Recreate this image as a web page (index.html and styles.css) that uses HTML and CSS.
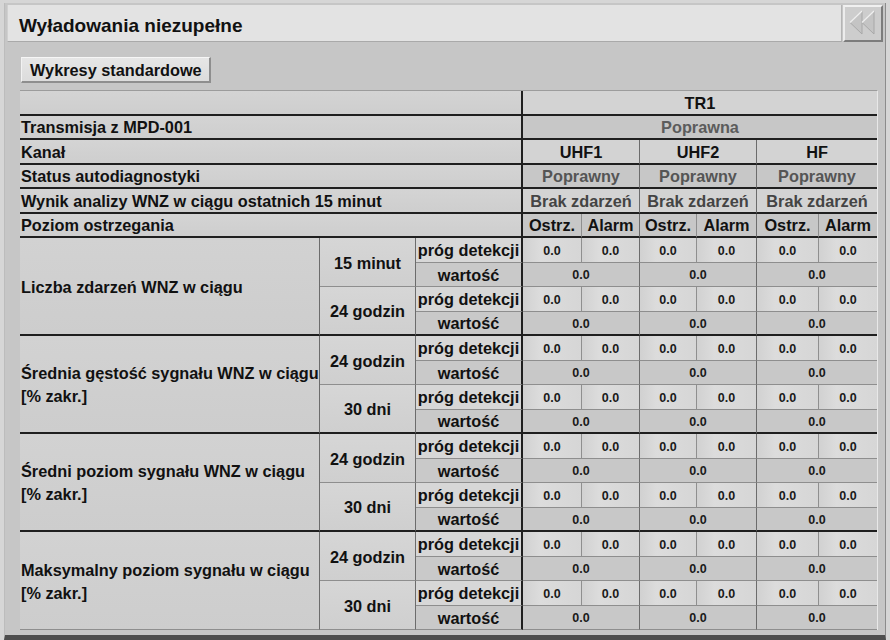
FILE: index.html
```html
<!DOCTYPE html>
<html lang="pl">
<head>
<meta charset="utf-8">
<title>Wyładowania niezupełne</title>
<link rel="stylesheet" href="styles.css">
</head>
<body>
<div class="panel">
  <div class="titlerow">
    <div class="titlebar">Wyładowania niezupełne</div>
    <div class="backbtn">
      <svg width="36" height="33" viewBox="0 0 36 33">
        <polygon points="5,15.5 17,4 17,27" fill="#c4c4c4" stroke="#a8a8a8" stroke-width="1"/>
        <polyline points="17,4 5,15.5" fill="none" stroke="#f0f0f0" stroke-width="1.3"/>
        <polygon points="17,15.5 29,4 29,27" fill="#c4c4c4" stroke="#a8a8a8" stroke-width="1"/>
        <polyline points="29,4 17,15.5" fill="none" stroke="#f0f0f0" stroke-width="1.3"/>
      </svg>
    </div>
  </div>
  <div class="toolbar">
    <div class="stdbtn">Wykresy standardowe</div>
  </div>
  <div class="tbl">
    <!-- header rows -->
    <div class="c l s3 hl bb2 br2"></div>
    <div class="c s6 hr1 bb2">TR1</div>

    <div class="c l s3 hl bb2 br2">Transmisja z MPD-001</div>
    <div class="c s6 hr2 bb2 st1">Poprawna</div>

    <div class="c l s3 hl bb2 br2">Kanał</div>
    <div class="c s2 hr1 bb2 br1">UHF1</div>
    <div class="c s2 hr1 bb2 br1">UHF2</div>
    <div class="c s2 hr1 bb2">HF</div>

    <div class="c l s3 hl bb2 br2">Status autodiagnostyki</div>
    <div class="c s2 hr2 bb2 br1 st2">Poprawny</div>
    <div class="c s2 hr2 bb2 br1 st2">Poprawny</div>
    <div class="c s2 hr2 bb2 st2">Poprawny</div>

    <div class="c l s3 hl bb2 br2">Wynik analizy WNZ w ciągu ostatnich 15 minut</div>
    <div class="c s2 hr1 bb2 br1 st3">Brak zdarzeń</div>
    <div class="c s2 hr1 bb2 br1 st3">Brak zdarzeń</div>
    <div class="c s2 hr1 bb2 st3">Brak zdarzeń</div>

    <div class="c l s3 hl bb2 br2">Poziom ostrzegania</div>
    <div class="c hr2 bb2 brs">Ostrz.</div>
    <div class="c hr2 bb2 br1">Alarm</div>
    <div class="c hr2 bb2 brs">Ostrz.</div>
    <div class="c hr2 bb2 br1">Alarm</div>
    <div class="c hr2 bb2 brs">Ostrz.</div>
    <div class="c hr2 bb2">Alarm</div>

    <!-- group 1 -->
    <div class="c l r4 grp bb2 br1">Liczba zdarzeń WNZ w ciągu</div>
    <div class="c r2 per bb1 br1">15 minut</div>
    <div class="c pl bb1 br2">próg detekcji</div>
    <div class="v vp bb1 brs">0.0</div><div class="v vp bb1 br1">0.0</div>
    <div class="v vp bb1 brs">0.0</div><div class="v vp bb1 br1">0.0</div>
    <div class="v vp bb1 brs">0.0</div><div class="v vp bb1">0.0</div>
    <div class="c wl bb1 br2">wartość</div>
    <div class="v vw s2 bb1 br1">0.0</div><div class="v vw s2 bb1 br1">0.0</div><div class="v vw s2 bb1">0.0</div>

    <div class="c r2 per bb2 br1">24 godzin</div>
    <div class="c pl bb1 br2">próg detekcji</div>
    <div class="v vp bb1 brs">0.0</div><div class="v vp bb1 br1">0.0</div>
    <div class="v vp bb1 brs">0.0</div><div class="v vp bb1 br1">0.0</div>
    <div class="v vp bb1 brs">0.0</div><div class="v vp bb1">0.0</div>
    <div class="c wl bb2 br2">wartość</div>
    <div class="v vw s2 bb2 br1">0.0</div><div class="v vw s2 bb2 br1">0.0</div><div class="v vw s2 bb2">0.0</div>

    <!-- group 2 -->
    <div class="c l r4 grp bb2 br1 two">Średnia gęstość sygnału WNZ w ciągu<br>[% zakr.]</div>
    <div class="c r2 per bb1 br1">24 godzin</div>
    <div class="c pl bb1 br2">próg detekcji</div>
    <div class="v vp bb1 brs">0.0</div><div class="v vp bb1 br1">0.0</div>
    <div class="v vp bb1 brs">0.0</div><div class="v vp bb1 br1">0.0</div>
    <div class="v vp bb1 brs">0.0</div><div class="v vp bb1">0.0</div>
    <div class="c wl bb1 br2">wartość</div>
    <div class="v vw s2 bb1 br1">0.0</div><div class="v vw s2 bb1 br1">0.0</div><div class="v vw s2 bb1">0.0</div>

    <div class="c r2 per bb2 br1">30 dni</div>
    <div class="c pl bb1 br2">próg detekcji</div>
    <div class="v vp bb1 brs">0.0</div><div class="v vp bb1 br1">0.0</div>
    <div class="v vp bb1 brs">0.0</div><div class="v vp bb1 br1">0.0</div>
    <div class="v vp bb1 brs">0.0</div><div class="v vp bb1">0.0</div>
    <div class="c wl bb2 br2">wartość</div>
    <div class="v vw s2 bb2 br1">0.0</div><div class="v vw s2 bb2 br1">0.0</div><div class="v vw s2 bb2">0.0</div>

    <!-- group 3 -->
    <div class="c l r4 grp bb2 br1 two">Średni poziom sygnału WNZ w ciągu<br>[% zakr.]</div>
    <div class="c r2 per bb1 br1">24 godzin</div>
    <div class="c pl bb1 br2">próg detekcji</div>
    <div class="v vp bb1 brs">0.0</div><div class="v vp bb1 br1">0.0</div>
    <div class="v vp bb1 brs">0.0</div><div class="v vp bb1 br1">0.0</div>
    <div class="v vp bb1 brs">0.0</div><div class="v vp bb1">0.0</div>
    <div class="c wl bb1 br2">wartość</div>
    <div class="v vw s2 bb1 br1">0.0</div><div class="v vw s2 bb1 br1">0.0</div><div class="v vw s2 bb1">0.0</div>

    <div class="c r2 per bb2 br1">30 dni</div>
    <div class="c pl bb1 br2">próg detekcji</div>
    <div class="v vp bb1 brs">0.0</div><div class="v vp bb1 br1">0.0</div>
    <div class="v vp bb1 brs">0.0</div><div class="v vp bb1 br1">0.0</div>
    <div class="v vp bb1 brs">0.0</div><div class="v vp bb1">0.0</div>
    <div class="c wl bb2 br2">wartość</div>
    <div class="v vw s2 bb2 br1">0.0</div><div class="v vw s2 bb2 br1">0.0</div><div class="v vw s2 bb2">0.0</div>

    <!-- group 4 -->
    <div class="c l r4 grp bb1 br1 two">Maksymalny poziom sygnału w ciągu<br>[% zakr.]</div>
    <div class="c r2 per bb1 br1">24 godzin</div>
    <div class="c pl bb1 br2">próg detekcji</div>
    <div class="v vp bb1 brs">0.0</div><div class="v vp bb1 br1">0.0</div>
    <div class="v vp bb1 brs">0.0</div><div class="v vp bb1 br1">0.0</div>
    <div class="v vp bb1 brs">0.0</div><div class="v vp bb1">0.0</div>
    <div class="c wl bb1 br2">wartość</div>
    <div class="v vw s2 bb1 br1">0.0</div><div class="v vw s2 bb1 br1">0.0</div><div class="v vw s2 bb1">0.0</div>

    <div class="c r2 per bb1 br1">30 dni</div>
    <div class="c pl bb1 br2">próg detekcji</div>
    <div class="v vp bb1 brs">0.0</div><div class="v vp bb1 br1">0.0</div>
    <div class="v vp bb1 brs">0.0</div><div class="v vp bb1 br1">0.0</div>
    <div class="v vp bb1 brs">0.0</div><div class="v vp bb1">0.0</div>
    <div class="c wl bb1 br2">wartość</div>
    <div class="v vw s2 bb1 br1">0.0</div><div class="v vw s2 bb1 br1">0.0</div><div class="v vw s2 bb1">0.0</div>
  </div>
</div>
</body>
</html>
```
FILE: styles.css
```css
html, body {
  margin: 0;
  padding: 0;
}
body {
  width: 890px;
  height: 640px;
  overflow: hidden;
  background: #d6d6d6;
  font-family: "Liberation Sans", Arial, sans-serif;
  color: #111;
}
.panel {
  box-sizing: border-box;
  margin: 3px 0 0 4px;
  width: 882px;
  height: 637px;
  padding: 2px 2px 0 3px;
  background: #c6c6c6;
  border-left: 1px solid #bcbcbc;
  border-right: 1px solid #8c8c8c;
  border-bottom: 5px solid #4e4e4e;
}
.titlerow {
  display: flex;
  gap: 1px;
  height: 37px;
  margin-left: -1px;
}
.titlebar {
  flex: 1;
  box-sizing: border-box;
  background: #e3e3e3;
  border-bottom: 1px solid #a9a9a9;
  border-right: 1px solid #b4b4b4;
  border-left: 1px solid #d0d0d0;
  font-weight: bold;
  font-size: 19px;
  padding: 6px 0 0 11px;
  display: flex;
  align-items: center;
}
.backbtn {
  width: 40px;
  box-sizing: border-box;
  background: #cdcdcd;
  border-top: 2px solid #f0f0f0;
  border-left: 2px solid #ececec;
  border-bottom: 2px solid #7c7c7c;
  border-right: 2px solid #7c7c7c;
  display: flex;
  align-items: center;
  justify-content: center;
}
.toolbar {
  margin-top: 15px;
  margin-left: 13px;
  height: 26px;
  display: flex;
}
.stdbtn {
  box-sizing: border-box;
  width: 190px;
  height: 26px;
  background: linear-gradient(#e6e6e6, #dcdcdc);
  border-top: 1px solid #f6f6f6;
  border-left: 1px solid #f2f2f2;
  border-bottom: 2px solid #8e8e8e;
  border-right: 2px solid #8e8e8e;
  font-weight: bold;
  font-size: 16.3px;
  padding: 1px 0 0 8px;
  display: flex;
  align-items: center;
}
.tbl {
  margin-top: 7px;
  margin-left: 12px;
  width: 858px;
  box-sizing: border-box;
  border-top: 1px solid #9c9c9c;
  border-right: 1px solid #e8e8e8;
  display: grid;
  grid-template-columns: 300px 96px 107px 59px 58px 57px 60px 62px 58px;
  grid-template-rows: repeat(22, 24.5px);
}
.c {
  box-sizing: border-box;
  display: flex;
  align-items: center;
  justify-content: center;
  font-weight: bold;
  font-size: 16.3px;
  white-space: nowrap;
  overflow: hidden;
  padding-top: 2px;
}
.l {
  justify-content: flex-start;
  padding-left: 1px;
}
.two {
  white-space: normal;
  line-height: 23px;
}
.v {
  box-sizing: border-box;
  display: flex;
  align-items: center;
  justify-content: center;
  font-weight: bold;
  font-size: 12.5px;
  color: #1a1a1a;
  padding-top: 2px;
}
.s2 { grid-column: span 2; }
.s3 { grid-column: span 3; }
.s6 { grid-column: span 6; }
.r2 { grid-row: span 2; }
.r4 { grid-row: span 4; }

.bb2 { border-bottom: 2px solid #1f1f1f; }
.bb1 { border-bottom: 1px solid #8e8e8e; }
.br2 { border-right: 2px solid #1f1f1f; }
.br1 { border-right: 1px solid #6c6c6c; }
.brs { border-right: 1px solid #8f8f8f; }

.hl { background: linear-gradient(#d4d4d4, #cecece); }
.hr1 { background: #d3d3d3; }
.hr2 { background: #c7c7c7; }
.st1 { color: #5c5c5c; }
.st2 { color: #555; }
.st3 { color: #444; }

.grp { background: linear-gradient(#d2d2d2, #cdcdcd); }
.per { background: linear-gradient(#d6d6d6, #cfcfcf); }
.pl { background: #d7d7d7; }
.wl { background: #c9c9c9; }
.vp { background: linear-gradient(90deg, #d1d1d1 0%, #dcdcdc 30%, #d6d6d6 100%); }
.vw { background: #c8c8c8; }
```
